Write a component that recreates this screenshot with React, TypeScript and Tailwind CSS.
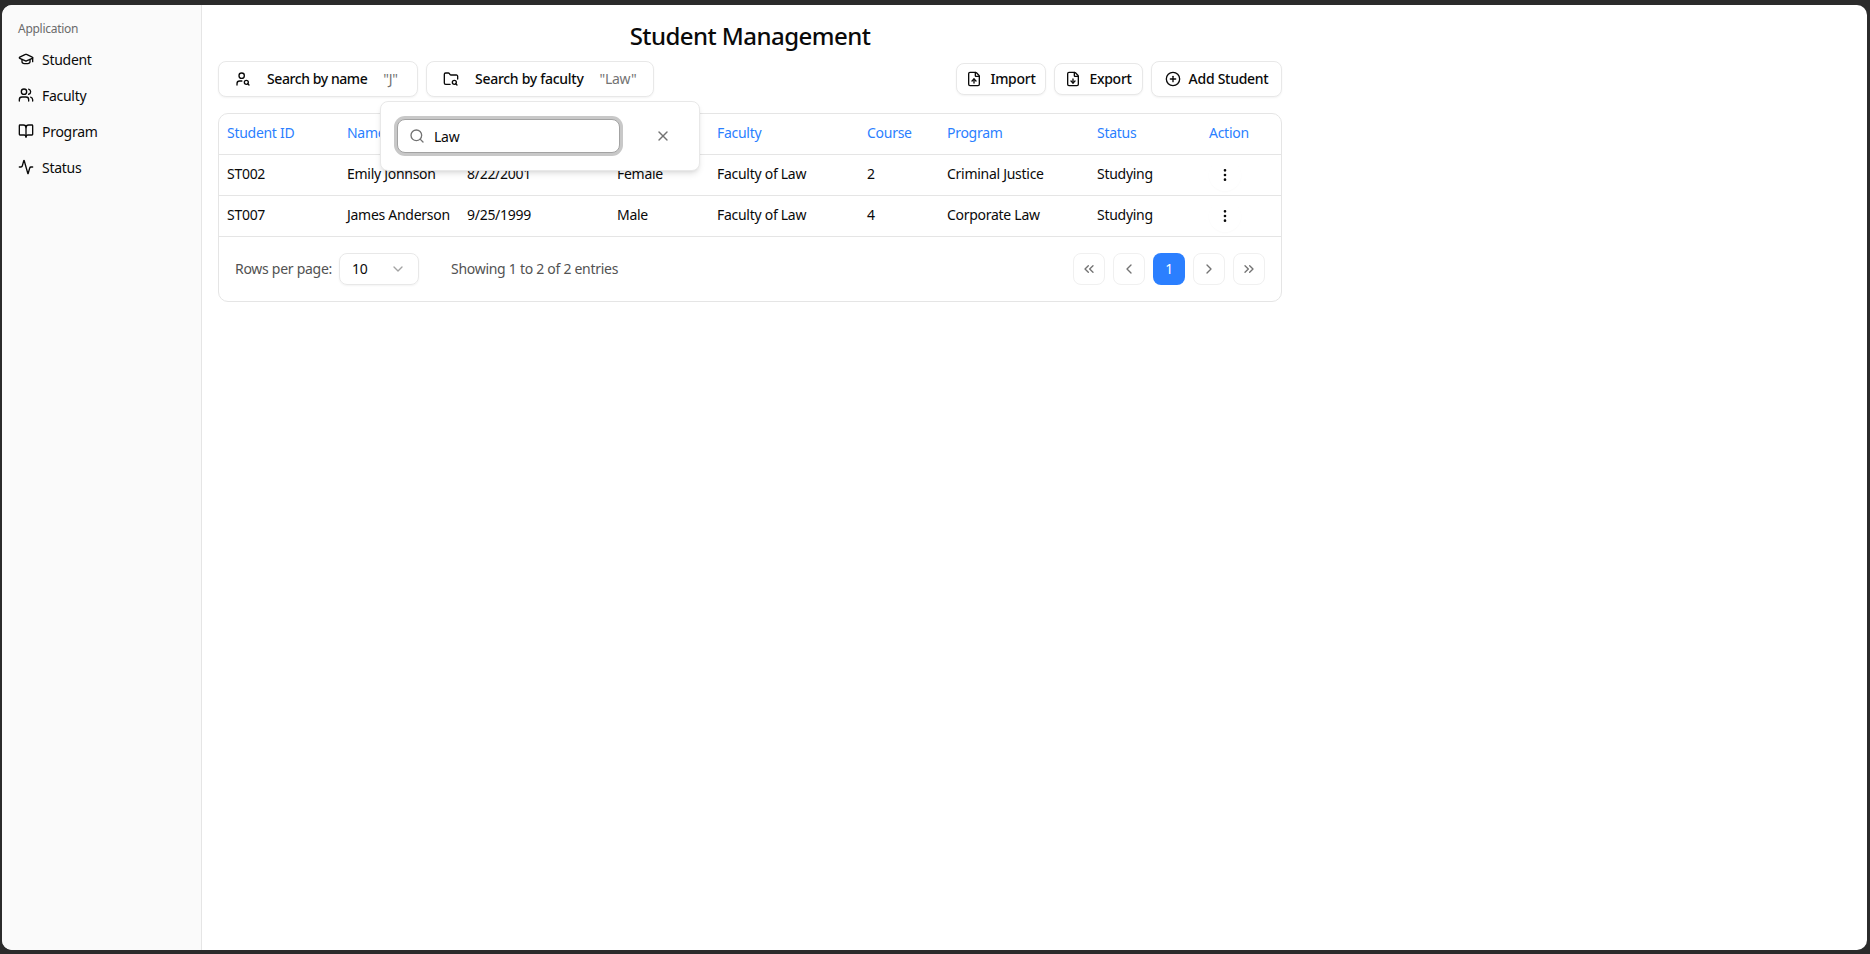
import { Activity, BookOpen, ChevronDown, ChevronLeft, ChevronRight, ChevronsLeft, ChevronsRight, CirclePlus, EllipsisVertical, FileDown, FileUp, FolderSearch, GraduationCap, Search, UserSearch, Users, X } from "lucide-react";

const nav = [
  { label: "Student", Icon: GraduationCap },
  { label: "Faculty", Icon: Users },
  { label: "Program", Icon: BookOpen },
  { label: "Status", Icon: Activity },
];

const rows = [
  ["ST002", "Emily Johnson", "8/22/2001", "Female", "Faculty of Law", "2", "Criminal Justice", "Studying"],
  ["ST007", "James Anderson", "9/25/1999", "Male", "Faculty of Law", "4", "Corporate Law", "Studying"],
];

const heads = ["Student ID", "Name", "Date of Birth", "Gender", "Faculty", "Course", "Program", "Status", "Action"];
const widths = [120, 120, 150, 100, 150, 80, 150, 112, 80];

function PageButton({ children }: { children: React.ReactNode }) {
  return (
    <button className="flex h-8 w-8 items-center justify-center rounded-lg border border-[#f0f0f0] bg-white text-[#737373]">
      {children}
    </button>
  );
}

export default function App() {
  return (
    <div className="h-screen w-full bg-[#2b2b2b] pt-[5px] pr-[3px] pb-[4px] pl-[2px] font-['Noto_Sans',sans-serif] text-[14px] tracking-[-0.02em] text-[#0a0a0a]">
      <div className="flex h-full overflow-hidden rounded-[10px] bg-white">
        <aside className="w-[200px] shrink-0 border-r border-[#e5e5e5] bg-[#fafafa] px-4 pt-[16px]">
          <div className="text-[12px] leading-4 text-[#6b6b6b]">Application</div>
          <nav className="mt-[4px] flex flex-col">
            {nav.map(({ label, Icon }) => (
              <div key={label} className="flex h-9 items-center gap-2">
                <Icon size={16} strokeWidth={2} />
                <span>{label}</span>
              </div>
            ))}
          </nav>
        </aside>
        <main className="relative flex-1 pl-4 pt-[15px]">
          <div className="w-[1064px]">
            <h1 className="whitespace-nowrap text-center text-[24px] font-medium leading-8 tracking-[-0.55px]">Student Management</h1>
            <div className="mt-[9px] flex h-9 items-center">
              <button className="flex h-9 w-[200px] items-center rounded-lg border border-[#e8e8e8] bg-white pb-[2px] pl-4 font-medium shadow-xs">
                <UserSearch size={16} className="mt-[2px]" />
                <span className="ml-4 tracking-[-0.03em]">Search by name</span>
                <span className="ml-4 font-normal text-[#737373]">"J"</span>
              </button>
              <button className="ml-2 flex h-9 w-[228px] items-center rounded-lg border border-[#e8e8e8] bg-white pb-[2px] pl-4 font-medium shadow-xs">
                <FolderSearch size={16} className="mt-[2px]" />
                <span className="ml-4">Search by faculty</span>
                <span className="ml-4 font-normal text-[#737373]">"Law"</span>
              </button>
              <div className="ml-auto flex items-center gap-2">
                <button className="flex h-8 w-[90px] items-center justify-center gap-2 rounded-lg border border-[#e8e8e8] bg-white pb-[2px] font-medium shadow-xs">
                  <FileUp size={16} className="mt-[2px]" />Import
                </button>
                <button className="flex h-8 w-[89px] items-center justify-center gap-2 rounded-lg border border-[#e8e8e8] bg-white pb-[2px] font-medium shadow-xs">
                  <FileDown size={16} className="mt-[2px]" />Export
                </button>
                <button className="flex h-9 w-[131px] items-center justify-center gap-2 rounded-lg border border-[#e8e8e8] bg-white pb-[2px] font-medium shadow-xs">
                  <CirclePlus size={16} className="mt-[2px]" />Add Student
                </button>
              </div>
            </div>
            <div className="mt-[16px] overflow-hidden rounded-[10px] border border-[#e5e5e5]">
              <table className="w-full table-fixed border-collapse text-left">
                <colgroup>
                  {widths.map((w, i) => (
                    <col key={i} style={{ width: w }} />
                  ))}
                </colgroup>
                <thead>
                  <tr className="h-[40px] border-b border-[#e5e5e5]">
                    {heads.map((h) => (
                      <th key={h} className="px-2 pb-[2px] font-normal text-[#2b7fff]">{h}</th>
                    ))}
                  </tr>
                </thead>
                <tbody>
                  {rows.map((r) => (
                    <tr key={r[0]} className="h-[41px] border-b border-[#e5e5e5]">
                      {r.map((c, i) => (
                        <td key={i} className="px-2 pb-[2px] whitespace-nowrap">{c}</td>
                      ))}
                      <td className="px-2">
                        <div className="flex h-8 w-8 items-center justify-center rounded-full bg-white shadow-[0_1px_2px_rgba(0,0,0,0.02)]">
                          <EllipsisVertical size={16} />
                        </div>
                      </td>
                    </tr>
                  ))}
                </tbody>
              </table>
              <div className="flex h-[64px] items-center px-4">
                <span className="pb-[1px] text-[#525252]">Rows per page:</span>
                <div className="ml-[7px] flex h-8 w-20 items-center justify-between rounded-lg border border-[#e8e8e8] pl-3 pr-3 shadow-xs">
                  <span>10</span>
                  <ChevronDown size={16} className="text-[#a3a3a3]" />
                </div>
                <span className="ml-8 pb-[1px] text-[#525252]">Showing 1 to 2 of 2 entries</span>
                <div className="ml-auto flex items-center gap-2">
                  <PageButton><ChevronsLeft size={16} /></PageButton>
                  <PageButton><ChevronLeft size={16} /></PageButton>
                  <button className="flex h-8 w-8 items-center justify-center rounded-lg bg-[#2b7fff] text-white">1</button>
                  <PageButton><ChevronRight size={16} /></PageButton>
                  <PageButton><ChevronsRight size={16} /></PageButton>
                </div>
              </div>
            </div>
          </div>
          <div className="absolute left-[178px] top-[96px] flex h-[70px] w-[320px] items-center rounded-lg border border-[#e8e8e8] bg-white pl-4 shadow-md">
            <div className="flex h-[34px] w-[223px] items-center rounded-lg border border-[#a3a3a3] bg-white pl-[11px] ring-[3px] ring-[#c8c8c8]">
              <Search size={16} className="text-[#737373]" />
              <span className="ml-[9px]">Law</span>
            </div>
            <X size={16} className="mb-[1px] ml-[35px] text-[#737373]" />
          </div>
        </main>
      </div>
    </div>
  );
}
